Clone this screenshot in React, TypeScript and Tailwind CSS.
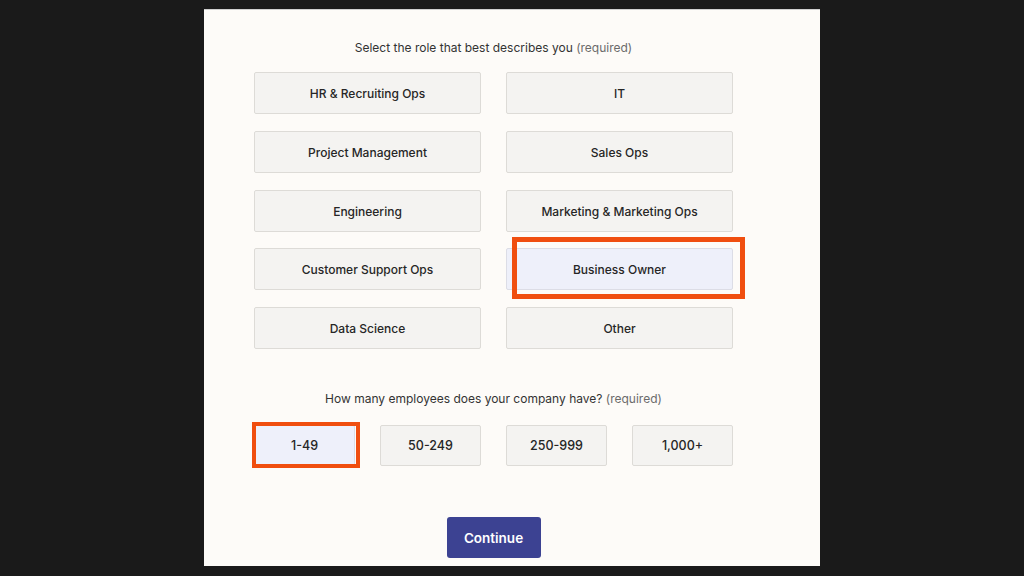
import React from "react";

const roles = [
  "HR & Recruiting Ops",
  "IT",
  "Project Management",
  "Sales Ops",
  "Engineering",
  "Marketing & Marketing Ops",
  "Customer Support Ops",
  "Business Owner",
  "Data Science",
  "Other",
];

const sizes = ["1-49", "50-249", "250-999", "1,000+"];

export default function App() {
  return (
    <div
      className="w-[1024px] h-[576px] bg-[#1a1a1a] pl-[204px] pt-[9px] overflow-hidden"
      style={{ fontFamily: "Inter, 'Noto Sans', sans-serif" }}
    >
      <div className="w-[616px] h-[557px] bg-[#fdfbf8] border-t border-[#cfcfcf] pl-[50px] pt-[29px]">
        <div className="w-[479px] flex flex-col items-center">
          <p className="text-[12px] leading-[18px] text-[#333333]">
            Select the role that best describes you{" "}
            <span className="text-[#6b6b6b]">(required)</span>
          </p>
          <div className="mt-[15px] grid grid-cols-[227px_227px] gap-x-[25px] gap-y-[16.75px]">
            {roles.map((r) => {
              const sel = r === "Business Owner";
              return (
                <div key={r} className="relative">
                  <button
                    className={`w-full h-[42px] pt-[2px] rounded-[2px] border text-[12px] font-medium text-[#262626] ${
                      sel
                        ? "bg-[#eef0fa] border-[#dcdde6]"
                        : "bg-[#f4f3f1] border-[#dddbd7]"
                    }`}
                  >
                    {r}
                  </button>
                  {sel && (
                    <div className="absolute left-[6px] -top-[11px] -right-[12px] -bottom-[9px] border-[5px] border-[#f04e0f] pointer-events-none" />
                  )}
                </div>
              );
            })}
          </div>
          <p className="mt-[41px] text-[12px] leading-[18px] text-[#333333]">
            How many employees does your company have?{" "}
            <span className="text-[#6b6b6b]">(required)</span>
          </p>
          <div className="mt-[17px] grid grid-cols-[101px_101px_101px_101px] gap-x-[25px]">
            {sizes.map((s) => {
              const sel = s === "1-49";
              return (
                <div key={s} className="relative">
                  <button
                    className={`w-full h-[41px] pt-[1px] rounded-[2px] border text-[12.5px] font-medium text-[#262626] ${
                      sel
                        ? "bg-[#eef0fa] border-[#dcdde6]"
                        : "bg-[#f4f3f1] border-[#dddbd7]"
                    }`}
                  >
                    {s}
                  </button>
                  {sel && (
                    <div className="absolute -left-[2px] -top-[3px] -right-[5px] -bottom-[2px] border-[4px] border-[#f04e0f] pointer-events-none" />
                  )}
                </div>
              );
            })}
          </div>
          <button className="mt-[51px] w-[94px] h-[41px] pt-[1px] rounded-[3px] bg-[#3c4292] text-white text-[13.5px] font-semibold">
            Continue
          </button>
        </div>
      </div>
    </div>
  );
}
